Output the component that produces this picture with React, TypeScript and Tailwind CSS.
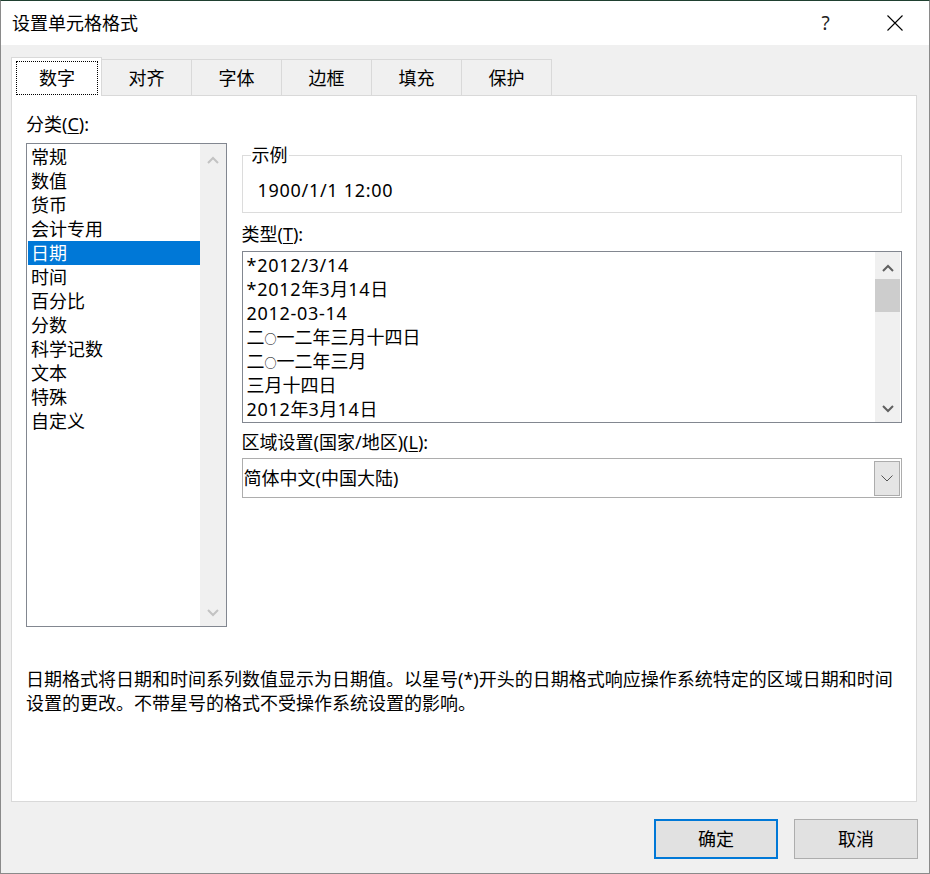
import React from "react";

function Chevron({ up, color }: { up: boolean; color: string }) {
  return (
    <svg width="12" height="8" viewBox="0 0 12 8">
      <path
        d={up ? "M1 7L6 2L11 7" : "M1 1L6 6L11 1"}
        fill="none"
        stroke={color}
        strokeWidth="2"
      />
    </svg>
  );
}

const N = ({ children }: { children: React.ReactNode }) => (
  <span className="tracking-[0.7px]">{children}</span>
);

const categories = [
  "常规",
  "数值",
  "货币",
  "会计专用",
  "日期",
  "时间",
  "百分比",
  "分数",
  "科学记数",
  "文本",
  "特殊",
  "自定义",
];

const Circle = () => <span className="text-[12px]">○</span>;

const types: React.ReactNode[] = [
  <N>*2012/3/14</N>,
  <>
    <N>*2012</N>年<N>3</N>月<N>14</N>日
  </>,
  <N>2012-03-14</N>,
  <>
    二<Circle />一二年三月十四日
  </>,
  <>
    二<Circle />一二年三月
  </>,
  "三月十四日",
  <>
    <N>2012</N>年<N>3</N>月<N>14</N>日
  </>,
];

const tabs = ["对齐", "字体", "边框", "填充", "保护"];

export default function App() {
  return (
    <div className="w-[930px] h-[874px] bg-[#f0f0f0] border-x border-b border-[#8a8a8a] border-t border-t-[#1f4030] flex flex-col font-['Noto_Sans','Noto_Sans_CJK_SC',sans-serif] text-[18px] leading-[24px] text-black overflow-hidden">
      {/* title bar */}
      <div className="h-[44px] bg-white flex items-center shrink-0">
        <div className="pl-[11px] flex-1 text-[18px] leading-[24px]">设置单元格格式</div>
        <div className="w-[69px] h-full flex items-center justify-center text-[19px] text-[#222]">?</div>
        <div className="w-[69px] h-full flex items-center justify-center">
          <svg width="16" height="16" viewBox="0 0 16 16">
            <path d="M0.5 0.5L15.5 15.5M15.5 0.5L0.5 15.5" stroke="#000" strokeWidth="1.1" fill="none" />
          </svg>
        </div>
      </div>

      {/* body */}
      <div className="flex-1 flex flex-col pl-[10px] pr-[12px]">
        {/* tabs */}
        <div className="flex items-end pt-[12px]">
          <div className="relative z-10 w-[91px] h-[39px] -mb-px bg-white border-x border-t border-[#d9d9d9] pt-[3px] pb-[1px] pl-[4px] pr-[3px]">
            <div className="h-full border border-dotted border-black flex items-center justify-center">数字</div>
          </div>
          {tabs.map((t) => (
            <div
              key={t}
              className="w-[90px] h-[36px] border-t border-r border-[#d9d9d9] flex items-center justify-center"
            >
              {t}
            </div>
          ))}
        </div>

        {/* panel */}
        <div className="h-[707px] bg-white border border-[#d9d9d9] px-[14px] pt-[16px]">
          <div className="flex gap-[15px]">
            {/* left column */}
            <div className="w-[201px] flex flex-col">
              <div>
                分类(<span className="underline underline-offset-2">C</span>):
              </div>
              <div className="mt-[7px] h-[484px] border border-[#828790] flex">
                <div className="flex-1 pt-[1px]">
                  {categories.map((c) => (
                    <div
                      key={c}
                      className={
                        c === "日期"
                          ? "h-[24px] ml-[1px] pl-[3px] bg-[#0078d7] text-white"
                          : "h-[24px] ml-[1px] pl-[3px]"
                      }
                    >
                      {c}
                    </div>
                  ))}
                </div>
                <div className="w-[26px] bg-[#f0f0f0] flex flex-col justify-between">
                  <div className="h-[27px] pt-[4px] flex items-center justify-center">
                    <Chevron up color="#c3c3c3" />
                  </div>
                  <div className="h-[27px] flex items-center justify-center">
                    <Chevron up={false} color="#c3c3c3" />
                  </div>
                </div>
              </div>
            </div>

            {/* right column */}
            <div className="w-[662px] flex flex-col">
              <fieldset className="mt-[33px] border border-[#dcdcdc] p-0 m-0 min-w-0">
                <legend className="ml-[8px] px-[1px] leading-[20px]">示例</legend>
                <div className="pt-[13px] pb-[10px] pl-[15px]">
                  <N>1900/1/1 12:00</N>
                </div>
              </fieldset>

              <div className="mt-[9px]">
                类型(<span className="underline underline-offset-2">T</span>):
              </div>
              <div className="mt-[5px] h-[172px] border border-[#828790] flex">
                <div className="flex-1 pt-[1px] pl-[4px]">
                  {types.map((t, i) => (
                    <div key={i} className="h-[24px] whitespace-nowrap">
                      {t}
                    </div>
                  ))}
                </div>
                <div className="w-[25px] mr-[1px] bg-[#f0f0f0] flex flex-col">
                  <div className="h-[27px] pt-[4px] flex items-center justify-center">
                    <Chevron up color="#606060" />
                  </div>
                  <div className="h-[33px] bg-[#cdcdcd]" />
                  <div className="flex-1" />
                  <div className="h-[27px] flex items-center justify-center">
                    <Chevron up={false} color="#606060" />
                  </div>
                </div>
              </div>

              <div className="mt-[7px]">
                区域设置(国家/地区)(<span className="underline underline-offset-2">L</span>):
              </div>
              <div className="mt-[4px] h-[40px] border border-[#adadad] flex items-center">
                <div className="flex-1 pl-[1px]">简体中文(中国大陆)</div>
                <div className="w-[26px] h-[35px] mt-[1px] mr-[1px] bg-[#e5e5e5] border border-[#acacac] flex items-center justify-center">
                  <svg width="12" height="7" viewBox="0 0 12 7">
                    <path d="M0.5 0.5L6 6L11.5 0.5" fill="none" stroke="#555" strokeWidth="1" />
                  </svg>
                </div>
              </div>
            </div>
          </div>

          <div className="mt-[40px]">
            <div className="whitespace-nowrap">
              日期格式将日期和时间系列数值显示为日期值。以星号(*)开头的日期格式响应操作系统特定的区域日期和时间
            </div>
            <div className="whitespace-nowrap">设置的更改。不带星号的格式不受操作系统设置的影响。</div>
          </div>
        </div>

        {/* buttons */}
        <div className="flex justify-end gap-[16px] mt-[17px] -mr-px">
          <div className="w-[124px] h-[40px] border-2 border-[#0078d7] bg-[#e1e1e1] flex items-center justify-center">
            确定
          </div>
          <div className="w-[124px] h-[40px] border border-[#adadad] bg-[#e1e1e1] flex items-center justify-center">
            取消
          </div>
        </div>
      </div>
    </div>
  );
}
